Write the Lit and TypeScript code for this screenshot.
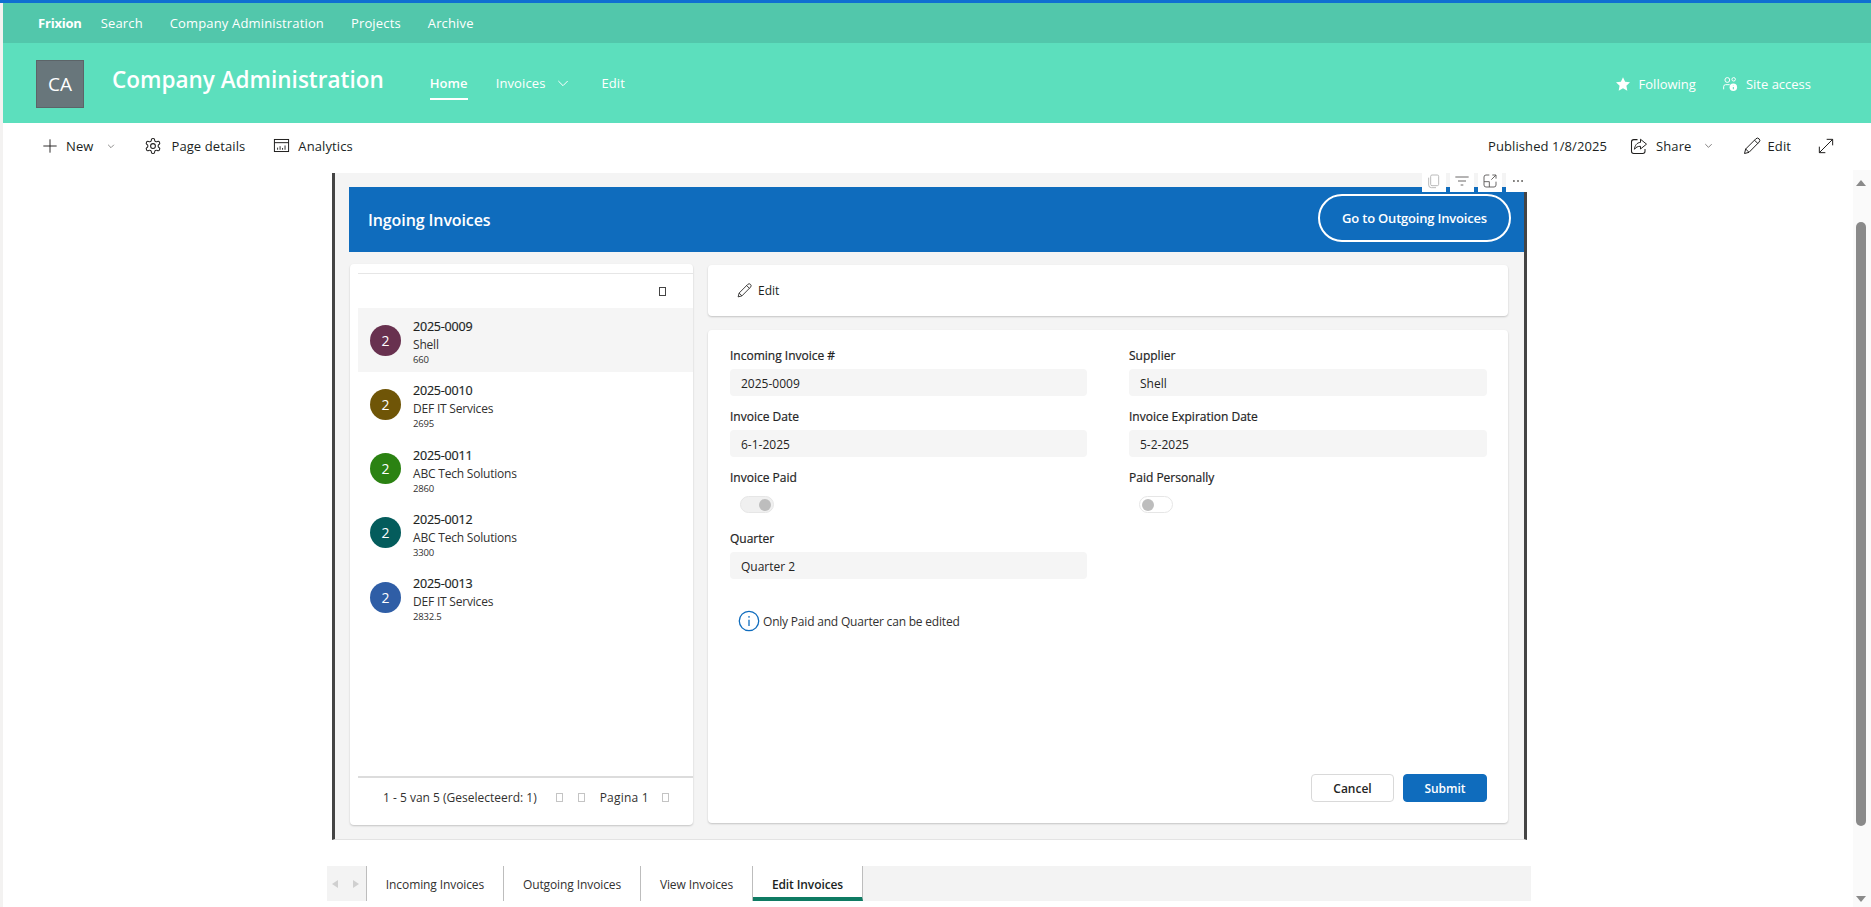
import { LitElement, html, css, svg } from 'lit';
import { customElement } from 'lit/decorators.js';
import { classMap } from 'lit/directives/class-map.js';

const invoices = [
  { nr: '2025-0009', name: 'Shell', amount: '660', color: '#68314f', active: true },
  { nr: '2025-0010', name: 'DEF IT Services', amount: '2695', color: '#6f5507' },
  { nr: '2025-0011', name: 'ABC Tech Solutions', amount: '2860', color: '#2b8212' },
  { nr: '2025-0012', name: 'ABC Tech Solutions', amount: '3300', color: '#045c5c' },
  { nr: '2025-0013', name: 'DEF IT Services', amount: '2832.5', color: '#2f5ea6' },
];

const icon = (w: number, body: unknown, box = '0 0 24 24', cls = '') => html`
  <svg class="ico ${cls}" width=${w} height=${w} viewBox=${box} fill="none" stroke="currentColor">${body}</svg>`;

const chevron = (w: number) => icon(w, svg`<polyline points="5,9 12,16 19,9" stroke-width="1.5" />`);

const pencil = (w: number) => icon(w, svg`
  <path d="M3 21l1.4-5.4L16.6 3.4a2.6 2.6 0 0 1 3.9 3.9L8.4 19.6z" stroke-width="1.2" stroke-linejoin="round" />
  <path d="M15 5l4 4M4.4 15.6l4 4" stroke-width="1.2" />`);

const gear = svg`
  <path stroke-width="1.4" d="M12.22 2h-.44a2 2 0 0 0-2 2v.18a2 2 0 0 1-1 1.73l-.43.25a2 2 0 0 1-2 0l-.15-.08a2 2 0 0 0-2.73.73l-.22.38a2 2 0 0 0 .73 2.73l.15.1a2 2 0 0 1 1 1.72v.51a2 2 0 0 1-1 1.74l-.15.09a2 2 0 0 0-.73 2.73l.22.38a2 2 0 0 0 2.73.73l.15-.08a2 2 0 0 1 2 0l.43.25a2 2 0 0 1 1 1.73V20a2 2 0 0 0 2 2h.44a2 2 0 0 0 2-2v-.18a2 2 0 0 1 1-1.73l.43-.25a2 2 0 0 1 2 0l.15.08a2 2 0 0 0 2.73-.73l.22-.39a2 2 0 0 0-.73-2.73l-.15-.08a2 2 0 0 1-1-1.74v-.5a2 2 0 0 1 1-1.74l.15-.09a2 2 0 0 0 .73-2.73l-.22-.38a2 2 0 0 0-2.73-.73l-.15.08a2 2 0 0 1-2 0l-.43-.25a2 2 0 0 1-1-1.73V4a2 2 0 0 0-2-2z" />
  <circle cx="12" cy="12" r="3.2" stroke-width="1.4" />`;

@customElement('app-root')
export class AppRoot extends LitElement {
  static styles = css`
    :host {
      display: block;
      height: 907px;
      overflow: hidden;
      background: #fff;
      font-family: 'Open Sans', 'Noto Sans', sans-serif;
      font-size: 13px;
      color: #201f1e;
    }
    .ico { display: block; flex: none; }
    .loadbar { height: 3px; background: #0f6fd1; }
    .shell { display: flex; height: 904px; }
    .edge { width: 3px; background: #f3f2f1; flex: none; }
    .page { flex: 1; min-width: 0; display: flex; flex-direction: column; }

    .suite {
      height: 40px;
      flex: none;
      background: #52c7ab;
      display: flex;
      align-items: center;
      padding-left: 35px;
      gap: 27px;
      color: #fff;
      font-size: 13px;
      letter-spacing: 0.15px;
    }
    .suite b { font-weight: 700; letter-spacing: -0.2px; margin-right: -8px; }

    .site {
      height: 80px;
      flex: none;
      background: #5cdfbd;
      color: #fff;
      display: flex;
      align-items: center;
      padding-left: 33px;
      padding-right: 60px;
    }
    .tile {
      width: 48px;
      height: 48px;
      background: #68767b;
      border: 1px solid #5c6468;
      box-sizing: border-box;
      display: flex;
      align-items: center;
      justify-content: center;
      font-size: 19px;
      margin-right: 28px;
      margin-top: 2px;
    }
    .site h1 {
      margin: 0 46px 8px 0;
      font-size: 22.5px;
      font-weight: 600;
      white-space: nowrap;
    }
    .sitenav { display: flex; align-items: center; gap: 30px; margin-top: 2px; letter-spacing: 0.1px; }
    .sitenav a {
      display: flex;
      align-items: center;
      gap: 10px;
      height: 32px;
      box-sizing: border-box;
      padding-bottom: 2px;
      position: relative;
    }
    .sitenav a.on { font-weight: 600; margin-right: -2px; }
    .sitenav a.on::after {
      content: '';
      position: absolute;
      left: 0;
      right: 0;
      bottom: 0;
      height: 2px;
      background: #fff;
    }
    .siteacts { margin-left: auto; display: flex; align-items: center; gap: 26px; margin-top: 2px; }
    .siteacts span { display: flex; align-items: center; gap: 8px; }

    .cmd {
      height: 47px;
      flex: none;
      display: flex;
      align-items: center;
      padding: 0 37px 2px 39px;
      box-sizing: border-box;
      letter-spacing: 0.1px;
    }
    .cmd span { display: flex; align-items: center; }
    .cmd .end { margin-left: auto; }
    .chev { color: #4a4847; }

    .content { flex: 1; min-height: 0; display: flex; }
    .main { flex: 1; min-width: 0; padding-left: 329px; padding-top: 3px; }
    .scroll {
      width: 18px;
      flex: none;
      background: #fafafa;
      position: relative;
    }
    .scroll i {
      position: absolute;
      left: 3px;
      top: 52px;
      width: 10px;
      height: 604px;
      border-radius: 5px;
      background: #8a8a8a;
    }
    .scroll .up, .scroll .down {
      position: absolute;
      left: 3px;
      width: 0;
      height: 0;
      border-left: 5px solid transparent;
      border-right: 5px solid transparent;
    }
    .scroll .up { top: 10px; border-bottom: 6px solid #8a8a8a; }
    .scroll .down { top: 726px; border-top: 6px solid #8a8a8a; }

    .webpart {
      width: 1195px;
      height: 667px;
      box-sizing: border-box;
      background: #f4f4f4;
      border-left: 3px solid #444;
      border-right: 3px solid #444;
      border-bottom: 1px solid #e3e3e3;
      padding-top: 14px;
      padding-left: 14px;
      position: relative;
    }
    .tools { position: absolute; top: 0; left: 1087px; display: flex; gap: 4px; }
    .tools span {
      width: 24px;
      height: 19px;
      padding-bottom: 3px;
      box-sizing: border-box;
      background: #fff;
      display: flex;
      align-items: center;
      justify-content: center;
      color: #605e5c;
    }
    .tools .off { color: #b5b5b5; }

    .banner {
      height: 65px;
      background: #0f6cbd;
      color: #fff;
      display: flex;
      align-items: center;
      justify-content: space-between;
      padding: 0 13px 0 19px;
      margin-bottom: 12px;
    }
    .banner h2 { margin: 0; font-size: 16px; font-weight: 600; letter-spacing: -0.1px; }
    .gobtn {
      width: 193px;
      height: 48px;
      box-sizing: border-box;
      border: 2px solid #fff;
      border-radius: 24px;
      display: flex;
      align-items: center;
      justify-content: center;
      font-weight: 600;
      font-size: 13px;
      letter-spacing: -0.2px;
      margin-top: -3px;
    }

    .cols { display: flex; gap: 15px; padding-left: 1px; }
    .card {
      background: #fff;
      border-radius: 4px;
      box-shadow: 0 1px 2px rgba(0, 0, 0, 0.2);
      box-sizing: border-box;
    }
    .listcard {
      width: 343px;
      height: 561px;
      padding: 9px 0 0 8px;
      display: flex;
      flex-direction: column;
    }
    .listhead {
      height: 35px;
      flex: none;
      box-sizing: border-box;
      border-top: 1px solid #e6e6e6;
      display: flex;
      align-items: center;
      justify-content: flex-end;
      padding-right: 27px;
    }
    .tofu { display: block; width: 7px; height: 9px; border: 1px solid #444; box-sizing: border-box; }
    .tofu.dim { border-color: #c4c4c4; }
    .row {
      height: 64.25px;
      display: flex;
      align-items: center;
      padding-left: 12px;
      gap: 12px;
    }
    .row.on { background: #f5f5f5; }
    .avatar {
      width: 31px;
      height: 31px;
      border-radius: 50%;
      color: #fff;
      font-size: 14px;
      display: flex;
      align-items: center;
      justify-content: center;
      flex: none;
    }
    .rowtext { display: flex; flex-direction: column; letter-spacing: -0.2px; padding-top: 4px; }
    .rowtext b {
      font-size: 12.5px;
      font-weight: 500;
      -webkit-text-stroke: 0.2px #201f1e;
      line-height: 18px;
      color: #201f1e;
    }
    .rowtext span { font-size: 12px; line-height: 17px; color: #323130; }
    .rowtext small { font-size: 9.5px; line-height: 13px; color: #323130; }
    .pager {
      margin-top: auto;
      height: 49px;
      box-sizing: border-box;
      border-top: 2px solid #dcdcdc;
      display: flex;
      align-items: center;
      padding-left: 25px;
      padding-bottom: 8px;
      font-size: 12px;
      color: #323130;
    }

    .right { width: 800px; padding-top: 1px; display: flex; flex-direction: column; gap: 14px; }
    .editbar {
      height: 51px;
      display: flex;
      align-items: center;
      gap: 5px;
      padding-left: 28px;
      font-size: 12px;
    }
    .form {
      height: 493px;
      padding: 16px 21px 21px 22px;
      display: flex;
      flex-direction: column;
    }
    .grid {
      display: grid;
      grid-template-columns: 357px 358px;
      column-gap: 42px;
      grid-auto-rows: 50px;
      row-gap: 11px;
    }
    .field label {
      display: block;
      height: 20px;
      line-height: 20px;
      margin-bottom: 3px;
      font-size: 12px;
      font-weight: 500;
      -webkit-text-stroke: 0.2px #242424;
      color: #242424;
    }
    .value {
      height: 27px;
      line-height: 29px;
      background: #f5f5f5;
      border-radius: 4px;
      padding-left: 11px;
      font-size: 12px;
      color: #242424;
    }
    .toggle {
      width: 34px;
      height: 17px;
      box-sizing: border-box;
      margin: 8px 0 0 10px;
      border-radius: 9px;
      display: flex;
      align-items: center;
      padding: 0 2px;
      border: 1px solid #e6e6e6;
    }
    .toggle i { width: 12px; height: 12px; border-radius: 50%; background: #bdbdbd; }
    .toggle.on { background: #f0f0f0; justify-content: flex-end; }
    .note {
      display: flex;
      align-items: center;
      gap: 3px;
      margin: 31px 0 0 8px;
      font-size: 12px;
      letter-spacing: -0.2px;
      color: #323130;
    }
    .note svg { color: #0f6cbd; }
    .actions { margin-top: auto; display: flex; justify-content: flex-end; gap: 9px; }
    .btn {
      width: 84px;
      height: 28px;
      box-sizing: border-box;
      border-radius: 4px;
      display: flex;
      align-items: center;
      justify-content: center;
      font-size: 12px;
      font-weight: 600;
      border: 1px solid #d9d9d9;
      color: #242424;
    }
    .btn.cancel { width: 83px; }
    .btn.primary { background: #0f6cbd; border-color: #0f6cbd; color: #fff; }

    .tabs {
      margin: 26px 0 0 -5px;
      width: 1204px;
      height: 35px;
      background: #f3f3f3;
      display: flex;
    }
    .arrows {
      width: 40px;
      box-sizing: border-box;
      display: flex;
      align-items: center;
      gap: 15px;
      padding-left: 5px;
      border-right: 1px solid #bdbdbd;
    }
    .arrows i { width: 0; height: 0; border-top: 4px solid transparent; border-bottom: 4px solid transparent; }
    .arrows .l { border-right: 6px solid #cfcfcf; }
    .arrows .r { border-left: 6px solid #cfcfcf; }
    .tab {
      background: #fff;
      box-sizing: border-box;
      border-right: 1px solid #bdbdbd;
      display: flex;
      align-items: center;
      justify-content: center;
      padding-top: 2px;
      font-size: 12px;
      letter-spacing: -0.1px;
      color: #323130;
    }
    .tab.on { font-weight: 600; color: #201f1e; border-bottom: 4px solid #0f7b63; padding-top: 5px; }
  `;

  render() {
    return html`
      <div class="loadbar"></div>
      <div class="shell">
        <div class="edge"></div>
        <div class="page">
          <div class="suite">
            <b>Frixion</b><span>Search</span><span>Company Administration</span><span>Projects</span><span>Archive</span>
          </div>
          <div class="site">
            <div class="tile">CA</div>
            <h1>Company Administration</h1>
            <nav class="sitenav">
              <a class="on">Home</a>
              <a>Invoices ${chevron(16)}</a>
              <a>Edit</a>
            </nav>
            <div class="siteacts">
              <span>${icon(16, svg`<path fill="#fff" stroke="none" d="M12 1.8l3.2 6.8 7.3.9-5.4 5.1 1.4 7.4-6.5-3.6-6.5 3.6 1.4-7.4L1.5 9.5l7.3-.9z" />`)} Following</span>
              <span>${icon(16, svg`
                <circle cx="8" cy="6" r="3.6" stroke-width="1.5" />
                <circle cx="17.5" cy="5" r="2.6" stroke-width="1.5" />
                <path d="M2.5 20v-4a3 3 0 0 1 3-3h6" stroke-width="1.5" />
                <circle cx="17" cy="17" r="5.6" fill="#fff" stroke="none" />
                <path d="M17 14.5v.5M17 16.5v3.5" stroke="#5cdfbd" stroke-width="1.6" />`)} Site access</span>
            </div>
          </div>
          ${this.renderCommands()}
          <div class="content">
            <div class="main">
              ${this.renderWebpart()}
              ${this.renderTabs()}
            </div>
            <div class="scroll"><div class="up"></div><i></i><div class="down"></div></div>
          </div>
        </div>
      </div>
    `;
  }

  renderCommands() {
    return html`
      <div class="cmd">
        <span>${icon(16, svg`<path d="M12 2v20M2 12h20" stroke-width="1.4" />`)}</span>
        <span style="margin-left:8px">New</span>
        <span class="chev" style="margin-left:13px">${chevron(10)}</span>
        <span style="margin-left:28px">${icon(18, gear)}</span>
        <span style="margin-left:9px">Page details</span>
        <span style="margin-left:28px">${icon(17, svg`
          <rect x="2" y="3.5" width="20" height="17" stroke-width="1.4" />
          <path d="M2 8h20" stroke-width="1.4" />
          <path d="M6.5 18v-3M10 18v-5M13.5 18v-2.5M17 18v-6" stroke-width="1.3" />`)}</span>
        <span style="margin-left:8px">Analytics</span>

        <span class="end">Published 1/8/2025</span>
        <span style="margin-left:23px">${icon(18, svg`
          <path d="M10 3.5H5a3 3 0 0 0-3 3V19a3 3 0 0 0 3 3h12a3 3 0 0 0 3-3v-3" stroke-width="1.4" />
          <path d="M14 3l8 6.5-8 6.5v-3.6c-3.5 0-6 1-8 4 .3-5 3.2-9 8-9.2z" stroke-width="1.3" stroke-linejoin="round" />`)}</span>
        <span style="margin-left:8px">Share</span>
        <span class="chev" style="margin-left:11px">${chevron(11)}</span>
        <span style="margin-left:28px">${pencil(20)}</span>
        <span style="margin-left:6px">Edit</span>
        <span style="margin-left:27px">${icon(16, svg`<path d="M2 22L22 2M13 2h9v9M2 13v9h9" stroke-width="1.5" />`)}</span>
      </div>
    `;
  }

  renderWebpart() {
    return html`
      <section class="webpart">
        <div class="tools">
          <span class="off">${icon(16, svg`
            <rect x="7" y="3" width="12" height="16" rx="2" stroke-width="1.4" />
            <path d="M4 7v11a4 4 0 0 0 4 4h7" stroke-width="1.4" />`)}</span>
          <span>${icon(16, svg`<path d="M2 6h20M6 12h12M10 18h4" stroke-width="1.4" />`)}</span>
          <span>${icon(16, svg`
            <path d="M11 3H6a3 3 0 0 0-3 3v12a3 3 0 0 0 3 3h12a3 3 0 0 0 3-3v-5M3 13h8v8" stroke-width="1.4" />
            <path d="M14 10l7-7M15.5 3H21v5.5" stroke-width="1.4" />`)}</span>
          <span>${icon(14, svg`<circle cx="5" cy="12" r="1.6" fill="currentColor" stroke="none" /><circle cx="12" cy="12" r="1.6" fill="currentColor" stroke="none" /><circle cx="19" cy="12" r="1.6" fill="currentColor" stroke="none" />`)}</span>
        </div>
        <div class="banner">
          <h2>Ingoing Invoices</h2>
          <div class="gobtn">Go to Outgoing Invoices</div>
        </div>
        <div class="cols">
          ${this.renderList()}
          <div class="right">
            <div class="card editbar">${pencil(17)} Edit</div>
            ${this.renderForm()}
          </div>
        </div>
      </section>
    `;
  }

  renderList() {
    return html`
      <div class="card listcard">
        <div class="listhead"><span class="tofu"></span></div>
        ${invoices.map((inv) => html`
          <div class=${classMap({ row: true, on: !!inv.active })}>
            <div class="avatar" style="background:${inv.color}">2</div>
            <div class="rowtext">
              <b>${inv.nr}</b>
              <span>${inv.name}</span>
              <small>${inv.amount}</small>
            </div>
          </div>
        `)}
        <div class="pager">
          <span>1 - 5 van 5 (Geselecteerd: 1)</span>
          <span class="tofu dim" style="margin-left:19px"></span>
          <span class="tofu dim" style="margin-left:15px"></span>
          <span style="margin-left:15px;letter-spacing:0.2px">Pagina 1</span>
          <span class="tofu dim" style="margin-left:13px"></span>
        </div>
      </div>
    `;
  }

  renderForm() {
    const field = (label: string, value: string) => html`
      <div class="field"><label>${label}</label><div class="value">${value}</div></div>`;
    const toggle = (label: string, on: boolean) => html`
      <div class="field"><label>${label}</label><div class=${classMap({ toggle: true, on })}><i></i></div></div>`;
    return html`
      <div class="card form">
        <div class="grid">
          ${field('Incoming Invoice #', '2025-0009')}
          ${field('Supplier', 'Shell')}
          ${field('Invoice Date', '6-1-2025')}
          ${field('Invoice Expiration Date', '5-2-2025')}
          ${toggle('Invoice Paid', true)}
          ${toggle('Paid Personally', false)}
          ${field('Quarter', 'Quarter 2')}
        </div>
        <div class="note">
          ${icon(22, svg`
            <circle cx="12" cy="12" r="10.6" stroke-width="1.4" />
            <path d="M12 10.5v7" stroke-width="1.4" />
            <circle cx="12" cy="7.5" r="0.9" fill="currentColor" stroke="none" />`)}
          Only Paid and Quarter can be edited
        </div>
        <div class="actions">
          <div class="btn cancel">Cancel</div>
          <div class="btn primary">Submit</div>
        </div>
      </div>
    `;
  }

  renderTabs() {
    const tabs = [
      { label: 'Incoming Invoices', width: 137 },
      { label: 'Outgoing Invoices', width: 137 },
      { label: 'View Invoices', width: 112 },
      { label: 'Edit Invoices', width: 110, on: true },
    ];
    return html`
      <div class="tabs">
        <div class="arrows"><i class="l"></i><i class="r"></i></div>
        ${tabs.map((t) => html`
          <div class=${classMap({ tab: true, on: !!t.on })} style="width:${t.width}px">${t.label}</div>
        `)}
      </div>
    `;
  }
}
